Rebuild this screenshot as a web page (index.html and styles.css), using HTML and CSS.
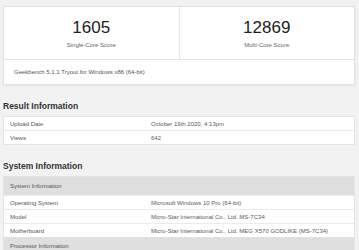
FILE: index.html
```html
<!DOCTYPE html>
<html lang="en">
<head>
  <meta charset="UTF-8" />
  <title>Geekbench Result</title>
  <link rel="stylesheet" href="styles.css">
</head>
<body>
  <div class="scores">
    <div class="score-row">
      <div class="score">
        <div class="score-value">1605</div>
        <div class="score-label">Single-Core Score</div>
      </div>
      <div class="score">
        <div class="score-value">12869</div>
        <div class="score-label">Multi-Core Score</div>
      </div>
    </div>
    <div class="score-footer">Geekbench 5.1.1 Tryout for Windows x86 (64-bit)</div>
  </div>

  <h3 class="first">Result Information</h3>
  <table class="info">
    <tr><td class="name">Upload Date</td><td class="value">October 19th 2020, 4:13pm</td></tr>
    <tr><td class="name">Views</td><td class="value">642</td></tr>
  </table>

  <h3>System Information</h3>
  <table class="info">
    <tr class="heading"><th colspan="2">System Information</th></tr>
    <tr><td class="name">Operating System</td><td class="value">Microsoft Windows 10 Pro (64-bit)</td></tr>
    <tr><td class="name">Model</td><td class="value">Micro-Star International Co., Ltd. MS-7C34</td></tr>
    <tr><td class="name">Motherboard</td><td class="value">Micro-Star International Co., Ltd. MEG X570 GODLIKE (MS-7C34)</td></tr>
    <tr class="heading"><th colspan="2">Processor Information</th></tr>
  </table>
</body>
</html>
```

FILE: styles.css
```css
* {
  margin: 0;
  padding: 0;
  box-sizing: border-box;
}

body {
  font-family: 'Liberation Sans', Arial, sans-serif;
  background: #f2f2f2;
  color: #333;
  padding: 6px 4px 0 3px;
  overflow: hidden;
}

/* score card on top */
.scores {
  background: white;
  border: 1px solid #e2e2e2;
  box-shadow: 0 1px 2px rgba(0, 0, 0, 0.06);
}
.score-row {
  display: flex;
  height: 53px;
  border-bottom: 1px solid #e2e2e2;
}
.score {
  flex: 1;
  text-align: center;
  padding-top: 11px;
}
.score + .score {
  border-left: 1px solid #e6e6e6;
}
.score-value {
  font-size: 17px;
  line-height: 20px;
  color: #222;
}
.score-label {
  font-size: 6px;
  line-height: 8px;
  margin-top: 3px;
  color: #666;
}
.score-footer {
  height: 24px;
  line-height: 24px;
  padding-left: 10px;
  font-size: 6px;
  color: #555;
}

/* section headings */
h3 {
  font-size: 8.5px;
  font-weight: bold;
  color: #333;
  line-height: 10px;
  margin: 16px 0 5px;
}

/* info tables */
.info {
  width: 100%;
  border-collapse: separate;
  border-spacing: 0;
  background: white;
  border: 1px solid #e4e4e4;
  font-size: 6px;
  color: #5a5a5a;
  white-space: nowrap;
}
.info td {
  height: 14px;
  border-top: 1px solid #ebebeb;
  padding: 0 7px 0 6px;
  vertical-align: middle;
}
.info tr:first-child td {
  border-top: none;
  height: 13px;
}
.info td.name {
  width: 147px;
  color: #555;
}
.info td.value {
  padding-left: 0;
}
.info tr.heading th {
  background: #dfdfdf;
  text-align: left;
  font-weight: normal;
  height: 18px;
  padding: 0 6px;
  color: #555;
}
```
